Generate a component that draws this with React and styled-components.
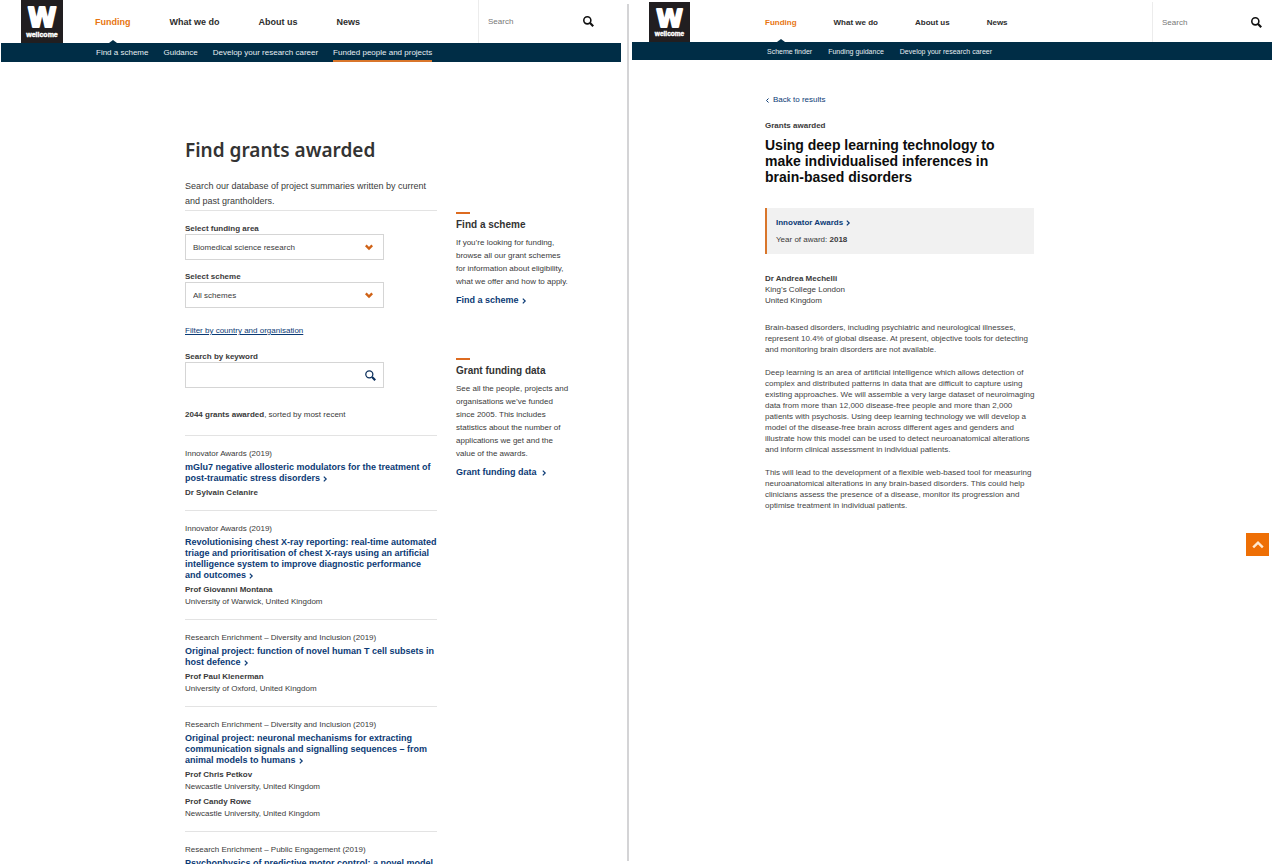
import styled, { createGlobalStyle, css } from "styled-components";

const GlobalStyle = createGlobalStyle`
  * {
    box-sizing: border-box;
  }
  body {
    margin: 0;
    background: #fff;
    color: #3a3a3a;
    font-family: "Liberation Sans", Arial, sans-serif;
    font-size: 8px;
    line-height: 12px;
  }
  h1, h2, h3, p, ul {
    margin: 0;
    padding: 0;
  }
  a {
    color: #0b3a75;
    text-decoration: none;
  }
  button, input, select {
    font: inherit;
    color: inherit;
  }
`

const Screens = styled.div`
  display: flex;
  height: 100vh;
  padding: 0 2px 3px 1px;
  overflow: hidden;
`

const Pane = styled.section`
  flex: ${(p) => p.$grow} 1 0;
  min-width: 0;
  overflow: hidden;
  position: relative;
  padding-top: ${(p) => (p.$compact ? "2px" : "0")};
`

const Divider = styled.div`
  width: 2px;
  margin: 4px 3px 3px 6px;
  background: #d4d4d6;
`

const TopBar = styled.header`
  display: flex;
  height: ${(p) => (p.$compact ? "40px" : "43px")};
  padding-left: ${(p) => (p.$compact ? "17px" : "20px")};
`

const LogoLink = styled.a`
  display: block;
  width: ${(p) => (p.$compact ? "41px" : "42px")};
  background: #211e20;
  svg {
    display: block;
    width: 100%;
    height: 100%;
  }
`

const MainNav = styled.nav`
  flex: 1;
  display: flex;
  gap: ${(p) => (p.$compact ? "37px" : "39px")};
  padding-left: ${(p) => (p.$compact ? "75px" : "32px")};
`

const NavLink = styled.a`
  display: flex;
  align-items: center;
  position: relative;
  padding-top: ${(p) => (p.$compact ? "2px" : "0")};
  color: #2d2d2d;
  font-size: ${(p) => (p.$compact ? "8px" : "9px")};
  font-weight: bold;
  white-space: nowrap;
  ${(p) => p.$active && css`
    color: #e87511;
    &::after {
      content: "";
      position: absolute;
      left: 50%;
      bottom: 0;
      margin-left: -4px;
      border: 4px solid transparent;
      border-top-width: 0;
      border-bottom: 3px solid #002d46;
    }
  `}
`

const SiteSearch = styled.form`
  display: flex;
  align-items: center;
  width: ${(p) => (p.$compact ? "120px" : "143px")};
  padding: ${(p) => (p.$compact ? "1px 10px 0 9px" : "0 27px 0 9px")};
  border-left: 1px solid #ececec;
  input {
    flex: 1;
    min-width: 0;
    padding: 0;
    border: 0;
    outline: none;
    background: none;
  }
  input::placeholder {
    color: #777;
    opacity: 1;
  }
`

const IconButton = styled.button`
  display: flex;
  padding: 0;
  border: 0;
  background: none;
  color: ${(p) => p.$color};
`

const SubNav = styled.nav`
  display: flex;
  gap: ${(p) => (p.$compact ? "16px" : "15px")};
  height: ${(p) => (p.$compact ? "18px" : "19px")};
  padding-left: ${(p) => (p.$compact ? "135px" : "95px")};
  background: #002d46;
  a {
    display: flex;
    align-items: center;
    padding-top: ${(p) => (p.$compact ? "2px" : "0")};
    color: #e6edf2;
    font-size: ${(p) => (p.$compact ? "7px" : "8px")};
    white-space: nowrap;
    border-top: 2px solid transparent;
    border-bottom: 2px solid transparent;
  }
  a[aria-current] {
    border-bottom-color: #d9762b;
  }
`

const Columns = styled.main`
  display: grid;
  grid-template-columns: minmax(0, 252px) minmax(0, 114px);
  column-gap: 19px;
  padding: 76px 0 0 184px;
`

const PageTitle = styled.h1`
  color: #333;
  font-family: "Noto Sans", sans-serif;
  font-size: 19px;
  font-weight: 600;
  line-height: 24px;
`

const Intro = styled.p`
  margin-top: 17px;
  padding-bottom: 1px;
  border-bottom: 1px solid #e3e3e3;
  font-size: 9px;
  line-height: 15px;
`

const Filters = styled.form`
  width: 199px;
  padding-top: 13px;
`

const Field = styled.div`
  margin-bottom: ${(p) => (p.$last ? "0" : "12px")};
  label {
    display: block;
    font-weight: bold;
    line-height: 10px;
  }
`

const Control = styled.div`
  display: flex;
  align-items: center;
  position: relative;
  height: 26px;
  border: 1px solid #d5d5d5;
  select, input {
    width: 100%;
    height: 100%;
    padding: 1px 30px 0 7px;
    border: 0;
    outline: none;
    background: none;
    appearance: none;
  }
  > button {
    position: absolute;
    right: 7px;
  }
`

const SelectMark = styled.span`
  display: flex;
  position: absolute;
  right: 10px;
  color: #cf6216;
  pointer-events: none;
`

const FilterLink = styled.a`
  display: block;
  margin: 17px 0 15px;
  text-decoration: underline;
`

const Count = styled.p`
  margin: 21px 0 14px;
`

const Grant = styled.article`
  padding: 12px 0 11px;
  border-top: 1px solid #e3e3e3;
`

const Meta = styled.p`
  line-height: 11px;
`

const GrantTitle = styled.h2`
  margin: 3px 0;
  font-size: 9px;
  line-height: 11px;
`

const Person = styled.p`
  & + & {
    margin-top: 3px;
  }
  strong {
    display: block;
  }
`

const Aside = styled.aside`
  padding-top: 74px;
`

const Promo = styled.section`
  margin-bottom: 52px;
  &::before {
    content: "";
    display: block;
    width: 14px;
    height: 2px;
    background: #dd6b20;
  }
  h2 {
    margin: 5px 0;
    color: #333;
    font-size: 10px;
    line-height: 12px;
  }
  p {
    line-height: 13px;
  }
  a {
    display: block;
    margin-top: 6px;
    font-size: 9px;
    font-weight: bold;
  }
`

const Detail = styled.main`
  max-width: 407px;
  padding: 34px 0 0 133px;
`

const BackLink = styled.a`
  display: flex;
  align-items: center;
  gap: 3px;
`

const Kicker = styled.p`
  margin-top: 14px;
  font-weight: bold;
`

const GrantHeading = styled.h1`
  max-width: 250px;
  margin: 5px 0 23px;
  color: #0d0d0d;
  font-size: 14px;
  line-height: 16px;
`

const AwardBox = styled.div`
  margin-right: 5px;
  padding: 9px 9px 8px;
  border-left: 2px solid #d9762b;
  background: #f1f1f1;
  a {
    display: block;
    margin-bottom: 5px;
    font-weight: bold;
  }
`

const Recipient = styled.p`
  margin: 19px 0 16px;
  line-height: 11px;
  strong {
    display: block;
  }
`

const Summary = styled.p`
  margin-bottom: 12px;
  color: #444;
  line-height: 11px;
`

const ToTop = styled.button`
  position: absolute;
  top: 533px;
  right: 3px;
  display: flex;
  align-items: center;
  justify-content: center;
  width: 23px;
  height: 23px;
  padding: 0;
  border: 0;
  background: #ee6f05;
  color: #ffe9cf;
`

const Chevron = styled.svg`
  display: inline-block;
  width: ${(p) => p.$size || 6}px;
  height: ${(p) => p.$size || 6}px;
  margin-left: ${(p) => p.$space || 0}px;
  vertical-align: -1px;
  fill: none;
  stroke: currentColor;
  stroke-width: ${(p) => p.$weight || 2};
`

const ARROWS = {
  right: "M3 1l4 4-4 4",
  left: "M7 1L3 5l4 4",
  up: "M1 7l4-4 4 4",
  down: "M1 3l4 4 4-4",
};

function Arrow({ to, size, weight, space }) {
  return (
    <Chevron viewBox="0 0 10 10" aria-hidden="true" $size={size} $weight={weight} $space={space}>
      <path d={ARROWS[to]} />
    </Chevron>
  );
}

function SearchIcon({ weight = 2 }) {
  return (
    <svg width="11" height="11" viewBox="0 0 14 14" fill="none" stroke="currentColor" aria-hidden="true">
      <circle cx="5.5" cy="5.5" r="4.5" strokeWidth={weight} />
      <path d="M9 9l4 4" strokeWidth="2.8" />
    </svg>
  );
}

function Logo({ compact }) {
  return (
    <LogoLink href="#" $compact={compact} aria-label="Wellcome home">
      <svg viewBox="0 0 42 43" fill="#fff" textAnchor="middle" fontFamily="DejaVu Sans, sans-serif" fontWeight="bold">
        <text x="21" y="27" fontSize="26" stroke="#fff" strokeWidth="2" strokeLinejoin="round">W</text>
        <text x="21" y="37" fontSize="7" fontFamily="Liberation Sans, sans-serif" stroke="#fff" strokeWidth="0.4">wellcome</text>
      </svg>
    </LogoLink>
  );
}

function Header({ compact, links, current }) {
  return (
    <>
      <TopBar $compact={compact}>
        <Logo compact={compact} />
        <MainNav $compact={compact}>
          <NavLink href="#" $compact={compact} $active>Funding</NavLink>
          <NavLink href="#" $compact={compact}>What we do</NavLink>
          <NavLink href="#" $compact={compact}>About us</NavLink>
          <NavLink href="#" $compact={compact}>News</NavLink>
        </MainNav>
        <SiteSearch $compact={compact}>
          <input type="search" placeholder="Search" aria-label="Search" />
          <IconButton type="button" aria-label="Submit search" $color="#111">
            <SearchIcon />
          </IconButton>
        </SiteSearch>
      </TopBar>
      <SubNav $compact={compact}>
        {links.map((link) => (
          <a key={link} href="#" aria-current={link === current ? "page" : undefined}>{link}</a>
        ))}
      </SubNav>
    </>
  );
}

const grants = [
  {
    meta: "Innovator Awards (2019)",
    title: "mGlu7 negative allosteric modulators for the treatment of post-traumatic stress disorders",
    people: [{ name: "Dr Sylvain Celanire" }],
  },
  {
    meta: "Innovator Awards (2019)",
    title: "Revolutionising chest X-ray reporting: real-time automated triage and prioritisation of chest X-rays using an artificial intelligence system to improve diagnostic performance and outcomes",
    people: [{ name: "Prof Giovanni Montana", place: "University of Warwick, United Kingdom" }],
  },
  {
    meta: "Research Enrichment – Diversity and Inclusion (2019)",
    title: "Original project: function of novel human T cell subsets in host defence",
    people: [{ name: "Prof Paul Klenerman", place: "University of Oxford, United Kingdom" }],
  },
  {
    meta: "Research Enrichment – Diversity and Inclusion (2019)",
    title: "Original project: neuronal mechanisms for extracting communication signals and signalling sequences – from animal models to humans",
    people: [
      { name: "Prof Chris Petkov", place: "Newcastle University, United Kingdom" },
      { name: "Prof Candy Rowe", place: "Newcastle University, United Kingdom" },
    ],
  },
  {
    meta: "Research Enrichment – Public Engagement (2019)",
    title: "Psychophysics of predictive motor control: a novel model",
    people: [],
  },
];

function GrantSearch() {
  return (
    <Columns>
      <div>
        <PageTitle>Find grants awarded</PageTitle>
        <Intro>Search our database of project summaries written by current and past grantholders.</Intro>
        <Filters>
          <Field>
            <label htmlFor="area">Select funding area</label>
            <Control>
              <select id="area">
                <option>Biomedical science research</option>
              </select>
              <SelectMark><Arrow to="down" size={8} weight={3} /></SelectMark>
            </Control>
          </Field>
          <Field $last>
            <label htmlFor="scheme">Select scheme</label>
            <Control>
              <select id="scheme">
                <option>All schemes</option>
              </select>
              <SelectMark><Arrow to="down" size={8} weight={3} /></SelectMark>
            </Control>
          </Field>
          <FilterLink href="#">Filter by country and organisation</FilterLink>
          <Field $last>
            <label htmlFor="keyword">Search by keyword</label>
            <Control>
              <input id="keyword" type="text" />
              <IconButton type="button" aria-label="Search grants" $color="#0b2f5c">
                <SearchIcon weight={1.6} />
              </IconButton>
            </Control>
          </Field>
        </Filters>
        <Count><strong>2044 grants awarded</strong>, sorted by most recent</Count>
        {grants.map((grant) => (
          <Grant key={grant.title}>
            <Meta>{grant.meta}</Meta>
            <GrantTitle>
              <a href="#">{grant.title}<Arrow to="right" space={2} /></a>
            </GrantTitle>
            {grant.people.map((person) => (
              <Person key={person.name}>
                <strong>{person.name}</strong>
                {person.place}
              </Person>
            ))}
          </Grant>
        ))}
      </div>
      <Aside>
        <Promo>
          <h2>Find a scheme</h2>
          <p>If you’re looking for funding, browse all our grant schemes for information about eligibility, what we offer and how to apply.</p>
          <a href="#">Find a scheme<Arrow to="right" space={2} /></a>
        </Promo>
        <Promo>
          <h2>Grant funding data</h2>
          <p>See all the people, projects and organisations we’ve funded since 2005. This includes statistics about the number of applications we get and the value of the awards.</p>
          <a href="#">Grant funding data<Arrow to="right" space={4} /></a>
        </Promo>
      </Aside>
    </Columns>
  );
}

function GrantDetail() {
  return (
    <Detail>
      <BackLink href="#"><Arrow to="left" size={5} />Back to results</BackLink>
      <Kicker>Grants awarded</Kicker>
      <GrantHeading>Using deep learning technology to make individualised inferences in brain-based disorders</GrantHeading>
      <AwardBox>
        <a href="#">Innovator Awards<Arrow to="right" space={2} /></a>
        <p>Year of award: <strong>2018</strong></p>
      </AwardBox>
      <Recipient>
        <strong>Dr Andrea Mechelli</strong>
        King’s College London
        <br />
        United Kingdom
      </Recipient>
      <Summary>Brain-based disorders, including psychiatric and neurological illnesses, represent 10.4% of global disease. At present, objective tools for detecting and monitoring brain disorders are not available.</Summary>
      <Summary>Deep learning is an area of artificial intelligence which allows detection of complex and distributed patterns in data that are difficult to capture using existing approaches. We will assemble a very large dataset of neuroimaging data from more than 12,000 disease-free people and more than 2,000 patients with psychosis. Using deep learning technology we will develop a model of the disease-free brain across different ages and genders and illustrate how this model can be used to detect neuroanatomical alterations and inform clinical assessment in individual patients.</Summary>
      <Summary>This will lead to the development of a flexible web-based tool for measuring neuroanatomical alterations in any brain-based disorders. This could help clinicians assess the presence of a disease, monitor its progression and optimise treatment in individual patients.</Summary>
    </Detail>
  );
}

function App() {
  return (
    <>
      <GlobalStyle />
      <Screens>
        <Pane $grow={620}>
          <Header
            links={["Find a scheme", "Guidance", "Develop your research career", "Funded people and projects"]}
            current="Funded people and projects"
          />
          <GrantSearch />
        </Pane>
        <Divider />
        <Pane $grow={640} $compact>
          <Header compact links={["Scheme finder", "Funding guidance", "Develop your research career"]} />
          <GrantDetail />
          <ToTop type="button" aria-label="Back to top">
            <Arrow to="up" size={12} weight={2} />
          </ToTop>
        </Pane>
      </Screens>
    </>
  );
}

export default App;
